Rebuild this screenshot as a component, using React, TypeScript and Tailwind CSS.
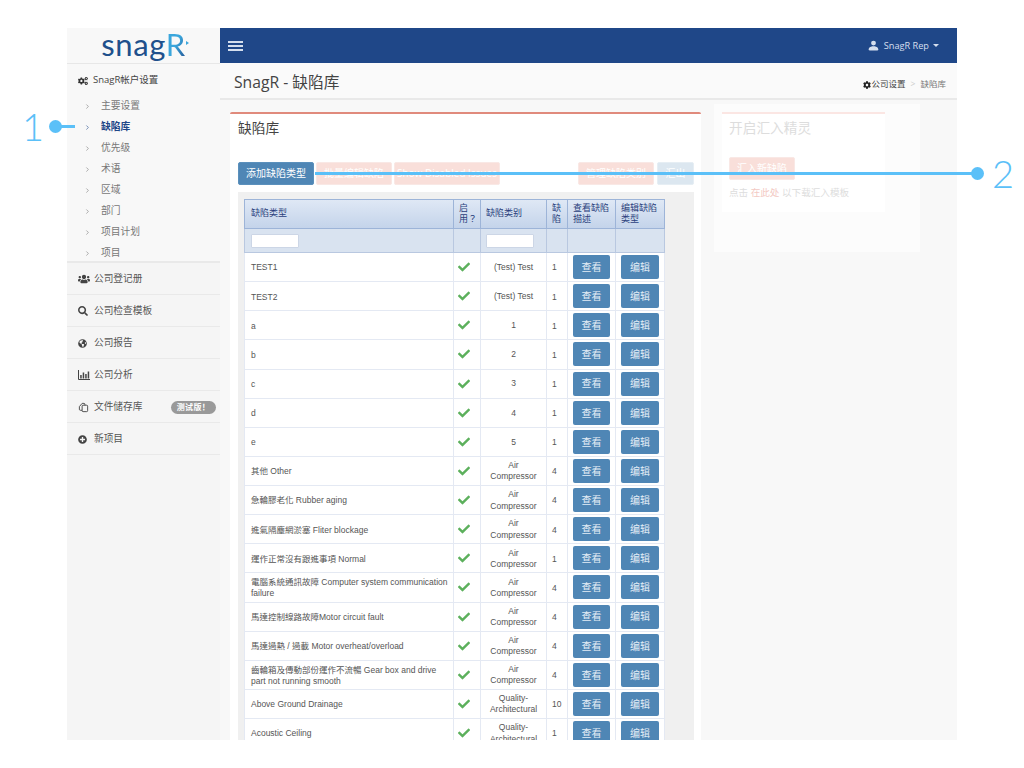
import React from 'react';
import { FaCogs, FaUsers, FaSearch, FaGlobeAmericas, FaPlusCircle, FaCheck, FaCog } from 'react-icons/fa';
import { BsPersonFill } from 'react-icons/bs';
import { ChevronRight } from 'lucide-react';

const sans = 'font-["Open_Sans","Noto_Sans_CJK_SC",sans-serif]';
const arial = 'font-["Liberation_Sans","Noto_Sans_CJK_TC",sans-serif]';

const subItems = ['主要设置', '缺陷库', '优先级', '术语', '区域', '部门', '项目计划', '项目'];

const BarsIcon = () => (
  <svg viewBox="0 0 12 10" className="w-[12px] h-[10px]" fill="currentColor">
    <path d="M.5 0v9.5H12" fill="none" stroke="currentColor" strokeWidth="1" />
    <rect x="2.2" y="5" width="1.5" height="3.5" />
    <rect x="4.7" y="2.5" width="1.5" height="6" />
    <rect x="7.2" y="4" width="1.5" height="4.5" />
    <rect x="9.7" y="1.5" width="1.5" height="7" />
  </svg>
);

const FilesIcon = () => (
  <svg viewBox="0 0 12 12" className="w-[11px] h-[11px]" fill="none" stroke="currentColor" strokeWidth="1">
    <rect x="4.5" y="3.5" width="6" height="7" rx="1" />
    <path d="M4.5 9H2.5a1 1 0 0 1-1-1V5L4.5 1.5h2a1 1 0 0 1 1 1v1" />
  </svg>
);

const mainItems = [
  { label: '公司登记册', icon: <FaUsers className="w-[12px] h-[12px]" /> },
  { label: '公司检查模板', icon: <FaSearch className="w-[10px] h-[10px]" /> },
  { label: '公司报告', icon: <FaGlobeAmericas className="w-[9px] h-[9px]" /> },
  { label: '公司分析', icon: <BarsIcon /> },
  { label: '文件储存库', icon: <FilesIcon />, badge: '测试版！' },
  { label: '新项目', icon: <FaPlusCircle className="w-[9px] h-[9px]" /> },
];

const rows: [string, string, string][] = [
  ['TEST1', '(Test) Test', '1'],
  ['TEST2', '(Test) Test', '1'],
  ['a', '1', '1'],
  ['b', '2', '1'],
  ['c', '3', '1'],
  ['d', '4', '1'],
  ['e', '5', '1'],
  ['其他 Other', 'Air Compressor', '4'],
  ['急輪膠老化 Rubber aging', 'Air Compressor', '4'],
  ['進氣隔塵網淤塞 Fliter blockage', 'Air Compressor', '4'],
  ['運作正常沒有跟進事項 Normal', 'Air Compressor', '1'],
  ['電腦系統通訊故障 Computer system communication failure', 'Air Compressor', '4'],
  ['馬達控制線路故障Motor circuit fault', 'Air Compressor', '4'],
  ['馬達過熱 / 過載 Motor overheat/overload', 'Air Compressor', '4'],
  ['齒輪箱及傳動部份運作不流暢 Gear box and drive part not running smooth', 'Air Compressor', '4'],
  ['Above Ground Drainage', 'Quality-Architectural', '10'],
  ['Acoustic Ceiling', 'Quality-Architectural', '1'],
];

const Sidebar: React.FC = () => (
  <aside className={`w-[153px] shrink-0 bg-[#f5f5f5] ${sans}`}>
    <div className="h-[36px] bg-[#f8f8f8] border-b border-[#e7e7e7] flex items-center justify-center">
      <span className='relative -translate-y-[2px] font-["Lato",sans-serif] text-[31px] leading-[34px] tracking-[0.6px] text-[#20508c]'>
        snag
        <span className="bg-gradient-to-br from-[#3aa6dc] via-[#3aa6dc] to-[#1f4788] bg-clip-text text-transparent">R</span>
        <span className="absolute right-[-3px] top-[14px] w-0 h-0 border-y-[2px] border-y-transparent border-l-[3px] border-l-[#3aa6dc]" />
      </span>
    </div>
    <div className="h-[199px] bg-[#f8f8f8] border-b-2 border-[#e9e9e9]">
      <div className="h-[32px] pt-[1px] flex items-center pl-[11px] text-[9.5px] text-[#444]">
        <FaCogs className="w-[10px] h-[10px] mr-[5px] text-[#333]" />
        SnagR帐户设置
      </div>
      {subItems.map((s) => (
        <div
          key={s}
          className={`h-[21px] flex items-center pl-[17px] text-[9.75px] ${s === '缺陷库' ? 'text-[#1f4788] font-bold' : 'text-[#777]'}`}
        >
          <ChevronRight className="w-[7px] h-[7px] mr-[10px]" strokeWidth={2} />
          {s}
        </div>
      ))}
    </div>
    {mainItems.map((m) => (
      <div key={m.label} className="h-[32px] pt-[1px] flex items-center pl-[11px] pr-[4px] border-b border-[#e9e9e9] text-[9.7px] text-[#555]">
        <span className="w-[16px] flex items-center text-[#444]">{m.icon}</span>
        <span className="flex-1">{m.label}</span>
        {m.badge && (
          <span className="bg-[#999] text-white rounded-full px-[6px] h-[13px] flex items-center text-[8px] font-bold tracking-[0.3px]">{m.badge}</span>
        )}
      </div>
    ))}
  </aside>
);

const Topbar: React.FC = () => (
  <header className={`h-[35px] bg-[#1f4788] flex items-center justify-between pl-[8px] pr-[18px] text-[#d5dfee] ${sans}`}>
    <div className="w-[15px] flex flex-col gap-[2px]">
      <span className="h-[2px] bg-[#d5dfee]" />
      <span className="h-[2px] bg-[#d5dfee]" />
      <span className="h-[2px] bg-[#d5dfee]" />
    </div>
    <div className="flex items-center text-[9.2px]">
      <BsPersonFill className="w-[13px] h-[13px] mr-[4px]" />
      SnagR Rep
      <span className="ml-[4px] w-0 h-0 border-x-[3px] border-x-transparent border-t-[3px] border-t-[#d5dfee]" />
    </div>
  </header>
);

const Button: React.FC<{ w: string; faded?: string; children: React.ReactNode }> = ({ w, faded, children }) => (
  <span className={`${w} ${faded ?? 'bg-[#4f86b5] border-[#5b90bc] text-[#e4edf5]'} shrink-0 h-[23px] flex items-center justify-center rounded-[2px] border text-white text-[10px] whitespace-nowrap`}>
    {children}
  </span>
);

const IssueTable: React.FC = () => (
  <table className={`table-fixed w-[420px] border-collapse border border-[#8fa8cf] text-[8.5px] leading-[11.3px] text-[#555] ${arial}`}>
    <colgroup>
      <col className="w-[209px]" />
      <col className="w-[27px]" />
      <col className="w-[66px]" />
      <col className="w-[21px]" />
      <col className="w-[48px]" />
      <col className="w-[49px]" />
    </colgroup>
    <thead className="text-[#2a3f7c] text-[9px]">
      <tr className="h-[29px] bg-gradient-to-b from-[#dfe8f5] to-[#c3d3ea]">
        <th className="border border-[#9db4d8] pl-[6px] text-left font-normal">缺陷类型</th>
        <th className="border border-[#9db4d8] px-[5px] text-left font-normal">启用？</th>
        <th className="border border-[#9db4d8] px-[5px] text-left font-normal">缺陷类别</th>
        <th className="border border-[#9db4d8] px-[5px] text-left font-normal">缺陷</th>
        <th className="border border-[#9db4d8] px-[5px] text-left font-normal">查看缺陷描述</th>
        <th className="border border-[#9db4d8] px-[5px] text-left font-normal">编辑缺陷类型</th>
      </tr>
      <tr className="h-[24px] bg-[#d9e3f0]">
        <td className="border border-[#b9c8e0] pl-[6px]">
          <span className="block w-[48px] h-[14px] bg-white border border-[#ccd6e6] rounded-[1px]" />
        </td>
        <td className="border border-[#b9c8e0]" />
        <td className="border border-[#b9c8e0] px-[5px]">
          <span className="block w-[48px] h-[14px] bg-white border border-[#ccd6e6] rounded-[1px]" />
        </td>
        <td className="border border-[#b9c8e0]" />
        <td className="border border-[#b9c8e0]" />
        <td className="border border-[#b9c8e0]" />
      </tr>
    </thead>
    <tbody className="bg-white">
      {rows.map((r) => (
        <tr key={r[0]} className="h-[29.125px]">
          <td className="border border-[#e4e9f3] pl-[6px] pr-[4px] pt-[2px]">{r[0]}</td>
          <td className="border border-[#e4e9f3]">
            <FaCheck className="w-[12px] h-[12px] ml-[4px] text-[#5cb05c]" />
          </td>
          <td className="border border-[#e4e9f3] px-[5px] pt-[1px] text-center">{r[1]}</td>
          <td className="border border-[#e4e9f3] px-[5px] pt-[2px]">{r[2]}</td>
          <td className="border border-[#e4e9f3] px-[5px]">
            <span className="h-[24px] flex items-center justify-center rounded-[2px] bg-[#4f86b5] text-[#e4edf5] text-[10px] pt-[1px]">查看</span>
          </td>
          <td className="border border-[#e4e9f3] px-[5px]">
            <span className="h-[24px] flex items-center justify-center rounded-[2px] bg-[#4f86b5] text-[#e4edf5] text-[10px] pt-[1px]">编辑</span>
          </td>
        </tr>
      ))}
    </tbody>
  </table>
);

const Content: React.FC = () => (
  <div className={`flex-1 min-h-0 overflow-hidden flex flex-col bg-[#f8f8f8] ${sans}`}>
    <div className="h-[37px] shrink-0 bg-[#fafafa] border-b-2 border-[#e9e9e9] flex items-center justify-between pl-[14px] pr-[11px]">
      <h1 className="text-[15.7px] text-[#444] mt-[4px]">SnagR - 缺陷库</h1>
      <div className="flex items-center text-[8.5px] text-[#444] mt-[8px]">
        <FaCog className="w-[8px] h-[8px] mr-[1px] text-[#222]" />
        公司设置
        <span className="mx-[5px] text-[#ccc]">&gt;</span>
        <span className="text-[#777]">缺陷库</span>
      </div>
    </div>
    <div className="flex-1 min-h-0 flex items-start pl-[10px] pt-[12px]">
      <section className="w-[471px] shrink-0 bg-white border-t-2 border-[#e08a7c] rounded-t-[2px] pl-[8px] pr-[7px]">
        <h2 className="text-[13.7px] text-[#444] pt-[4px] h-[48px]">缺陷库</h2>
        <div className="flex items-center gap-[2px]">
          <Button w="w-[76px]">添加缺陷类型</Button>
          <Button w="w-[76px]" faded="bg-[#f9dfda] border-[#f9e8e5]">批量编辑缺陷</Button>
          <Button w="w-[106px]" faded="bg-[#f9dfda] border-[#f9e8e5]">Show Disabled Issues</Button>
          <span className="ml-auto" />
          <Button w="w-[76px]" faded="bg-[#f9dfda] border-[#f9e8e5]">管理缺陷类别</Button>
          <Button w="w-[37px]" faded="ml-[1px] bg-[#dce7f0] border-[#e6eef4]">汇出</Button>
        </div>
        <div className="mt-[7px] bg-[#f0f0f0] pl-[6px] pt-[7px] h-[600px]">
          <IssueTable />
        </div>
      </section>
      <section className="ml-[13px] w-[206px] h-[148px] -mt-[8px] shrink-0 bg-[#fcfcfc] pl-[8px] pt-[8px]">
        <div className="w-[163px] h-[100px] bg-white border-t-2 border-[#fbe6e3] px-[7px]">
          <h2 className="text-[13.7px] text-[#ddd] pt-[4px] h-[43px]">开启汇入精灵</h2>
          <Button w="w-[66px]" faded="bg-[#f9dfda] border-[#f9e8e5]">汇入新缺陷</Button>
          <p className="mt-[6px] text-[9.6px] text-[#ddd]">点击 <span className="text-[#f3c9c3]">在此处</span> 以下载汇入模板</p>
        </div>
      </section>
    </div>
  </div>
);

export default function App() {
  return (
    <div className="relative w-[1024px] h-[768px] bg-white overflow-hidden">
      <div className="absolute left-[67px] top-[28px] w-[890px] h-[712px] flex overflow-hidden">
        <Sidebar />
        <div className="flex-1 min-w-0 flex flex-col">
          <Topbar />
          <Content />
        </div>
      </div>

      {/* callouts */}
      <span className='absolute left-[22px] top-[103px] text-[38px] leading-[46px] font-light text-[#5bc0f8] font-["Lato",sans-serif]'>1</span>
      <span className="absolute left-[49px] top-[120px] w-[13px] h-[13px] rounded-full bg-[#5bc0f8]" />
      <span className="absolute left-[56px] top-[125px] w-[19px] h-[3px] bg-[#5bc0f8]" />
      <span className='absolute left-[992px] top-[150px] text-[38px] leading-[46px] font-light text-[#5bc0f8] font-["Lato",sans-serif]'>2</span>
      <span className="absolute left-[971px] top-[167px] w-[13px] h-[13px] rounded-full bg-[#5bc0f8]" />
      <span className="absolute left-[315px] top-[172px] w-[660px] h-[3px] bg-[#5bc0f8]" />
    </div>
  );
}
